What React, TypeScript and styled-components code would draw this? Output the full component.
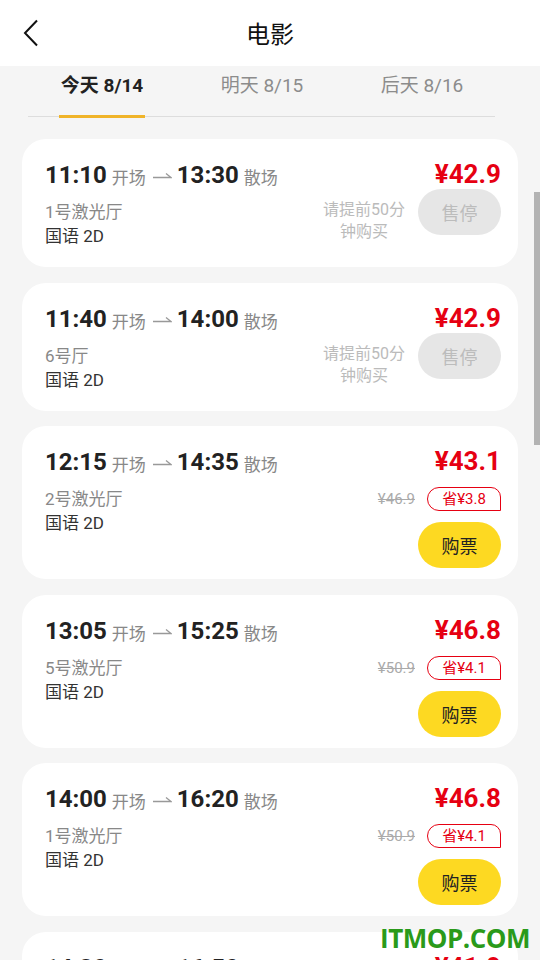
import React from "react";
import styled, { createGlobalStyle } from "styled-components";

const GlobalStyle = createGlobalStyle`
  html, body {
    margin: 0;
    padding: 0;
    background: #f5f5f5;
    height: 960px;
    overflow: hidden;
  }
  body {
    font-family: Roboto, "Noto Sans CJK SC", sans-serif;
  }
`;

type Show = {
  start: string;
  end: string;
  hall: string;
  lang: string;
  price: string;
  soldOut?: boolean;
  original?: string;
  save?: string;
};

const shows: Show[] = [
  { start: "11:10", end: "13:30", hall: "1号激光厅", lang: "国语 2D", price: "¥42.9", soldOut: true },
  { start: "11:40", end: "14:00", hall: "6号厅", lang: "国语 2D", price: "¥42.9", soldOut: true },
  { start: "12:15", end: "14:35", hall: "2号激光厅", lang: "国语 2D", price: "¥43.1", original: "¥46.9", save: "省¥3.8" },
  { start: "13:05", end: "15:25", hall: "5号激光厅", lang: "国语 2D", price: "¥46.8", original: "¥50.9", save: "省¥4.1" },
  { start: "14:00", end: "16:20", hall: "1号激光厅", lang: "国语 2D", price: "¥46.8", original: "¥50.9", save: "省¥4.1" },
  { start: "14:30", end: "16:50", hall: "3号激光厅", lang: "国语 2D", price: "¥41.9", original: "¥45.9", save: "省¥4.0" },
];

const tabs = [
  { label: "今天", date: "8/14" },
  { label: "明天", date: "8/15" },
  { label: "后天", date: "8/16" },
];

const Arrow = () => (
  <svg width="20" height="10" viewBox="0 0 20 10" fill="none">
    <path d="M1 7.5H19L14 3.5" stroke="#999" strokeWidth="1.3" />
  </svg>
);

const App: React.FC = () => {
  return (
    <Page>
      <GlobalStyle />
      <Header>
        <BackButton>
          <svg width="16" height="28" viewBox="0 0 16 28" fill="none">
            <path d="M14 1.5L2 14L14 26.5" stroke="#111" strokeWidth="2" />
          </svg>
        </BackButton>
        <Title>电影</Title>
      </Header>

      <TabBar>
        {tabs.map((t, i) => (
          <Tab key={t.date}>
            <TabText $active={i === 0}>
              {t.label} {t.date}
            </TabText>
            {i === 0 && <TabLine />}
          </Tab>
        ))}
      </TabBar>
      <Divider />

      <List>
        {shows.map((s, i) => (
          <Card key={i}>
            <LeftCol>
              <TimeRow>
                <Time>{s.start}</Time>
                <TimeLabel>开场</TimeLabel>
                <Arrow />
                <Time>{s.end}</Time>
                <TimeLabel>散场</TimeLabel>
              </TimeRow>
              <Hall>{s.hall}</Hall>
              <Lang>{s.lang}</Lang>
            </LeftCol>
            <RightCol>
              <Price>{s.price}</Price>
              {s.soldOut ? (
                <StopRow>
                  <Notice>
                    请提前50分
                    <br />
                    钟购买
                  </Notice>
                  <ActionButton $disabled>售停</ActionButton>
                </StopRow>
              ) : (
                <>
                  <DiscountRow>
                    <Original>{s.original}</Original>
                    <SaveBadge>{s.save}</SaveBadge>
                  </DiscountRow>
                  <ActionButton>购票</ActionButton>
                </>
              )}
            </RightCol>
          </Card>
        ))}
      </List>

      <ScrollBar />
      <Watermark>ITMOP.COM</Watermark>
    </Page>
  );
};

const Page = styled.div`
  width: 540px;
  height: 960px;
  overflow: hidden;
  position: relative;
  background: #f5f5f5;
`;

const Header = styled.div`
  height: 66px;
  background: #fff;
  display: flex;
  align-items: center;
  justify-content: center;
  position: relative;
`;

const BackButton = styled.div`
  position: absolute;
  left: 23px;
  top: 19px;
  width: 16px;
  height: 28px;
`;

const Title = styled.div`
  font-size: 24px;
  color: #111;
  font-family: "Noto Sans CJK SC", sans-serif;
  margin-top: -2px;
`;

const TabBar = styled.div`
  display: grid;
  grid-template-columns: repeat(3, 160px);
  margin: 0 0 0 22px;
  height: 52px;
`;

const Tab = styled.div`
  display: flex;
  flex-direction: column;
  align-items: center;
  position: relative;
`;

const TabText = styled.div<{ $active?: boolean }>`
  margin-top: 7px;
  font-size: 19px;
  line-height: 26px;
  font-weight: ${(p) => (p.$active ? 700 : 400)};
  color: ${(p) => (p.$active ? "#222" : "#8c8c8c")};
  font-family: Roboto, "Noto Sans CJK SC", sans-serif;
`;

const TabLine = styled.div`
  position: absolute;
  bottom: 0;
  left: 50%;
  transform: translateX(-50%);
  width: 86px;
  height: 3px;
  background: #f0b429;
`;

const Divider = styled.div`
  margin-left: 28px;
  width: 467px;
  height: 1px;
  background: #ddd;
  margin-top: -2px;
`;

const List = styled.div`
  display: flex;
  flex-direction: column;
  gap: 15.5px;
  padding: 22px 22px 0;
`;

const Card = styled.div`
  background: #fff;
  border-radius: 24px;
  padding: 20px 17px 11px 23px;
  display: flex;
  justify-content: space-between;
  align-items: flex-start;
`;

const LeftCol = styled.div`
  display: flex;
  flex-direction: column;
  padding-bottom: 8px;
`;

const TimeRow = styled.div`
  display: flex;
  align-items: center;
  height: 32px;
  gap: 5px;
  margin-bottom: 9px;
`;

const Time = styled.span`
  font-size: 24px;
  font-weight: 700;
  color: #222;
  font-family: Roboto, sans-serif;
`;

const TimeLabel = styled.span`
  font-size: 17px;
  color: #888;
  font-family: "Noto Sans CJK SC", sans-serif;
  margin-top: 3px;
  margin-right: 1px;
`;

const Hall = styled.div`
  font-size: 17px;
  line-height: 24px;
  color: #888;
`;

const Lang = styled.div`
  font-size: 17px;
  line-height: 24px;
  color: #333;
`;

const RightCol = styled.div`
  display: flex;
  flex-direction: column;
  align-items: flex-end;
`;

const Price = styled.div`
  font-size: 26px;
  font-weight: 700;
  color: #e60012;
  line-height: 30px;
  height: 30px;
  font-family: Roboto, sans-serif;
`;

const StopRow = styled.div`
  display: flex;
  align-items: flex-start;
  gap: 13px;
`;

const Notice = styled.div`
  margin-top: 10px;
  font-size: 16px;
  line-height: 22px;
  color: #bbb;
  text-align: center;
`;

const ActionButton = styled.div<{ $disabled?: boolean }>`
  width: 83px;
  height: 46px;
  border-radius: 23px;
  display: flex;
  align-items: center;
  justify-content: center;
  font-size: 18px;
  font-family: "Noto Sans CJK SC", sans-serif;
  background: ${(p) => (p.$disabled ? "#e6e6e6" : "#fdd922")};
  color: ${(p) => (p.$disabled ? "#bcbcbc" : "#222")};
  margin-top: ${(p) => (p.$disabled ? "0" : "11px")};
`;

const DiscountRow = styled.div`
  display: flex;
  align-items: center;
  gap: 12px;
  margin-top: 11px;
`;

const Original = styled.span`
  font-size: 15px;
  color: #aaa;
  text-decoration: line-through;
`;

const SaveBadge = styled.div`
  height: 22px;
  padding: 0 9px;
  border: 1px solid #e60012;
  border-radius: 12px 10px 0 12px;
  color: #e60012;
  font-size: 15px;
  line-height: 22px;
  min-width: 54px;
  text-align: center;
`;

const ScrollBar = styled.div`
  position: absolute;
  right: 0;
  top: 192px;
  width: 6px;
  height: 253px;
  background: #b3b3b3;
`;

const Watermark = styled.div`
  position: absolute;
  right: 10px;
  top: 920px;
  font-family: "Open Sans", sans-serif;
  font-weight: 700;
  font-size: 26px;
  color: #2a9a1a;
  letter-spacing: -0.5px;
`;

export default App;
